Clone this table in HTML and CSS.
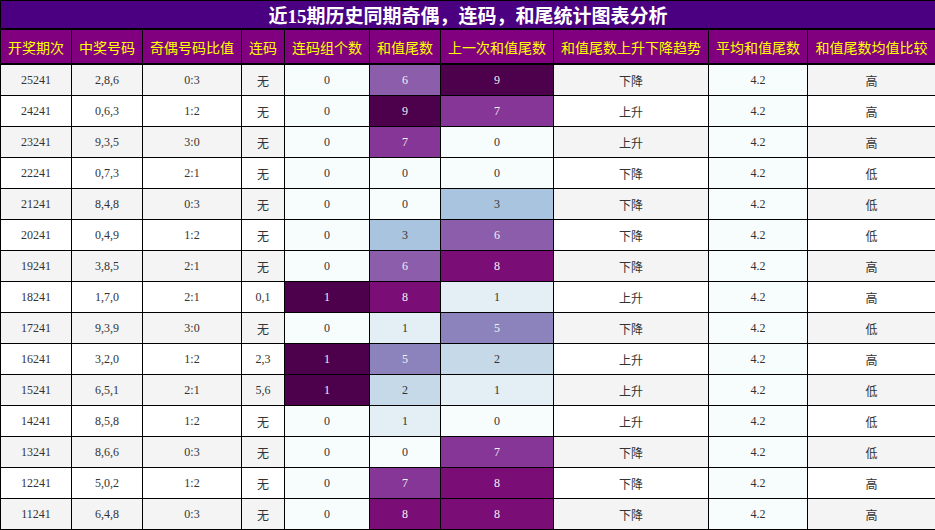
FILE: index.html
```html
<!DOCTYPE html>
<html lang="zh">
<head>
<meta charset="utf-8">
<link rel="stylesheet" href="styles.css">
</head>
<body>
<table class="stats">
<colgroup>
<col class="c1"><col class="c2"><col class="c3"><col class="c4"><col class="c5"><col class="c6"><col class="c7"><col class="c8"><col class="c9"><col class="c10">
</colgroup>
<thead>
<tr class="title-row"><th colspan="10">近15期历史同期奇偶，连码，和尾统计图表分析</th></tr>
<tr class="head-row">
<th>开奖期次</th><th>中奖号码</th><th>奇偶号码比值</th><th>连码</th><th>连码组个数</th><th>和值尾数</th><th>上一次和值尾数</th><th>和值尾数上升下降趋势</th><th>平均和值尾数</th><th>和值尾数均值比较</th>
</tr>
</thead>
<tbody>
<tr><td>25241</td><td>2,8,6</td><td>0:3</td><td class="cn">无</td><td class="b0">0</td><td class="b6">6</td><td class="b9">9</td><td class="cn">下降</td><td class="b0">4.2</td><td class="cn">高</td></tr>
<tr><td>24241</td><td>0,6,3</td><td>1:2</td><td class="cn">无</td><td class="b0">0</td><td class="b9">9</td><td class="b7">7</td><td class="cn">上升</td><td class="b0">4.2</td><td class="cn">高</td></tr>
<tr><td>23241</td><td>9,3,5</td><td>3:0</td><td class="cn">无</td><td class="b0">0</td><td class="b7">7</td><td class="b0">0</td><td class="cn">上升</td><td class="b0">4.2</td><td class="cn">高</td></tr>
<tr><td>22241</td><td>0,7,3</td><td>2:1</td><td class="cn">无</td><td class="b0">0</td><td class="b0">0</td><td class="b0">0</td><td class="cn">下降</td><td class="b0">4.2</td><td class="cn">低</td></tr>
<tr><td>21241</td><td>8,4,8</td><td>0:3</td><td class="cn">无</td><td class="b0">0</td><td class="b0">0</td><td class="b3">3</td><td class="cn">下降</td><td class="b0">4.2</td><td class="cn">低</td></tr>
<tr><td>20241</td><td>0,4,9</td><td>1:2</td><td class="cn">无</td><td class="b0">0</td><td class="b3">3</td><td class="b6">6</td><td class="cn">下降</td><td class="b0">4.2</td><td class="cn">低</td></tr>
<tr><td>19241</td><td>3,8,5</td><td>2:1</td><td class="cn">无</td><td class="b0">0</td><td class="b6">6</td><td class="b8">8</td><td class="cn">下降</td><td class="b0">4.2</td><td class="cn">高</td></tr>
<tr><td>18241</td><td>1,7,0</td><td>2:1</td><td>0,1</td><td class="b9">1</td><td class="b8">8</td><td class="b1">1</td><td class="cn">上升</td><td class="b0">4.2</td><td class="cn">高</td></tr>
<tr><td>17241</td><td>9,3,9</td><td>3:0</td><td class="cn">无</td><td class="b0">0</td><td class="b1">1</td><td class="b5">5</td><td class="cn">下降</td><td class="b0">4.2</td><td class="cn">低</td></tr>
<tr><td>16241</td><td>3,2,0</td><td>1:2</td><td>2,3</td><td class="b9">1</td><td class="b5">5</td><td class="b2">2</td><td class="cn">上升</td><td class="b0">4.2</td><td class="cn">高</td></tr>
<tr><td>15241</td><td>6,5,1</td><td>2:1</td><td>5,6</td><td class="b9">1</td><td class="b2">2</td><td class="b1">1</td><td class="cn">上升</td><td class="b0">4.2</td><td class="cn">低</td></tr>
<tr><td>14241</td><td>8,5,8</td><td>1:2</td><td class="cn">无</td><td class="b0">0</td><td class="b1">1</td><td class="b0">0</td><td class="cn">上升</td><td class="b0">4.2</td><td class="cn">低</td></tr>
<tr><td>13241</td><td>8,6,6</td><td>0:3</td><td class="cn">无</td><td class="b0">0</td><td class="b0">0</td><td class="b7">7</td><td class="cn">下降</td><td class="b0">4.2</td><td class="cn">低</td></tr>
<tr><td>12241</td><td>5,0,2</td><td>1:2</td><td class="cn">无</td><td class="b0">0</td><td class="b7">7</td><td class="b8">8</td><td class="cn">下降</td><td class="b0">4.2</td><td class="cn">高</td></tr>
<tr><td>11241</td><td>6,4,8</td><td>0:3</td><td class="cn">无</td><td class="b0">0</td><td class="b8">8</td><td class="b8">8</td><td class="cn">下降</td><td class="b0">4.2</td><td class="cn">高</td></tr>
</tbody>
</table>
</body>
</html>
```
FILE: styles.css
```css
html, body {
  margin: 0;
  padding: 0;
  background: #ffffff;
}

.stats {
  width: 935px;
  border-collapse: collapse;
  table-layout: fixed;
  font-family: "Liberation Serif", "Noto Sans CJK SC", serif;
}

.c1 { width: 71px; }
.c2 { width: 71px; }
.c3 { width: 99px; }
.c4 { width: 43px; }
.c5 { width: 85px; }
.c6 { width: 71px; }
.c7 { width: 113px; }
.c8 { width: 155px; }
.c9 { width: 99px; }
.c10 { width: 128px; }

.stats th,
.stats td {
  border: 1px solid #000;
  padding: 0;
  text-align: center;
  vertical-align: middle;
}

.title-row th {
  height: 27px;
  background: #4b0082;
  color: #ffffff;
  font-size: 19px;
  font-weight: bold;
  border-width: 1px 1px 2px 1px;
}

.head-row th {
  height: 33px;
  background: #800080;
  color: #ffff00;
  font-size: 14px;
  font-weight: normal;
  border-bottom-width: 2px;
}

.stats td {
  height: 30px;
  font-size: 12px;
  color: #333;
}

.stats td.cn {
  font-family: "Noto Sans CJK SC", sans-serif;
  font-size: 12px;
  color: #333;
}

.stats tbody tr:nth-child(odd) td { background: #f4f4f4; }
.stats tbody tr:nth-child(even) td { background: #ffffff; }

.stats tbody tr td.b0 { background: #f7fcfd; color: #333; }
.stats tbody tr td.b1 { background: #e3eef5; color: #333; }
.stats tbody tr td.b2 { background: #c6d9e9; color: #333; }
.stats tbody tr td.b3 { background: #a9c4de; color: #333; }
.stats tbody tr td.b5 { background: #8c83bd; color: #f1f1f1; }
.stats tbody tr td.b6 { background: #8b5daa; color: #f1f1f1; }
.stats tbody tr td.b7 { background: #863696; color: #f1f1f1; }
.stats tbody tr td.b8 { background: #7b0d77; color: #f1f1f1; }
.stats tbody tr td.b9 { background: #4d004b; color: #f1f1f1; }
```
